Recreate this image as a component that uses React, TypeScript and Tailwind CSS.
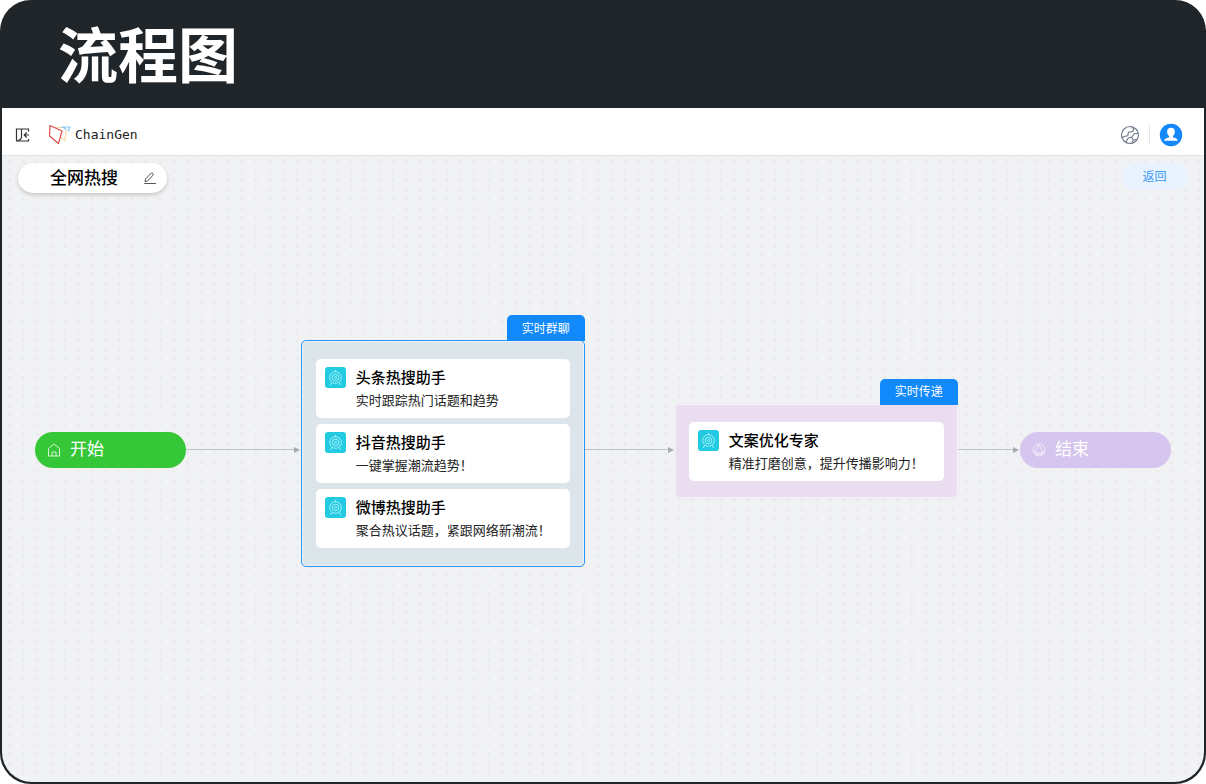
import React from "react";

type Agent = { name: string; desc: string };

const searchAgents: Agent[] = [
  { name: "头条热搜助手", desc: "实时跟踪热门话题和趋势" },
  { name: "抖音热搜助手", desc: "一键掌握潮流趋势！" },
  { name: "微博热搜助手", desc: "聚合热议话题，紧跟网络新潮流！" },
];

const copyAgents: Agent[] = [
  { name: "文案优化专家", desc: "精准打磨创意，提升传播影响力！" },
];

function CollapseIcon() {
  return (
    <svg className="size-4" viewBox="0 0 16 16" fill="none" stroke="#333" strokeWidth="1.2" aria-hidden="true">
      <path d="M14.500 4.500V2H2.500v12h12v-2" />
      <path d="M7.500 2v8.500c0 1.500-2 2.500-4 3.500" />
      <path d="M15 8H10.500M12.700 5.500L10.200 8l2.500 2.500" />
    </svg>
  );
}

function Logo() {
  return (
    <svg className="size-6 shrink-0" viewBox="0 0 24 24" fill="none" strokeWidth="1.2" aria-hidden="true">
      <path d="M7 4.500h9.500l1.500 3.500-1 9.500-4.500-3.500" stroke="#fbd9ae" />
      <path d="M13 4h9l-2 4.500M15.500 4.500l3 2" stroke="#85c4f7" />
      <path d="M2 2.500l12 5.500-3.500 12.500L1.500 13z" stroke="#dc4a4a" strokeLinejoin="round" />
    </svg>
  );
}

function PencilIcon() {
  return (
    <svg className="size-4" viewBox="0 0 16 16" fill="none" stroke="#555" strokeWidth="1" aria-hidden="true">
      <path d="M3.500 9L9.300 3c.8-.7 2.700.9 1.900 1.900L5.700 11l-2.700.6zM2.300 13.500h11.700" strokeLinejoin="round" />
    </svg>
  );
}

function GlobeIcon() {
  return (
    <svg className="size-5" viewBox="0 0 20 20" fill="none" stroke="#6b7685" strokeWidth="1.1" aria-hidden="true">
      <circle cx="10" cy="10" r="8.500" />
      <path
        d="M11.500 1.700l2.300 2.500-1 2.300-4.300.7-.8 3.600-3.700.7-2.200 1.600M18.300 8.300l-3.800.4-3 3.600-3.500 1-2 4M11.500 12.300l1.900 2.700-1.700 3.300M13.400 15l4-.8"
        strokeLinejoin="round"
      />
    </svg>
  );
}

function UserIcon() {
  return (
    <svg className="size-6" viewBox="0 0 24 24" aria-hidden="true">
      <circle cx="12" cy="12" r="11.200" fill="#1487fb" />
      <path
        d="M12 4.800c2.500 0 3.900 1.600 3.900 4 0 1.800-.8 3.400-2 4.200v1.200c1.500.7 4.700 1.100 4.900 3.500H5.200c.2-2.400 3.400-2.800 4.900-3.500V13c-1.200-.8-2-2.400-2-4.200 0-2.400 1.400-4 3.900-4z"
        fill="#fff"
      />
    </svg>
  );
}

function AgentIcon() {
  return (
    <svg className="mt-2 size-[21px] shrink-0" viewBox="0 0 21 21" fill="none" stroke="#b5f3fa" strokeWidth="0.9" aria-hidden="true">
      <rect width="21" height="21" rx="3" fill="#22cbe2" stroke="none" />
      <circle cx="10.500" cy="10.500" r="5.800" />
      <circle cx="10.500" cy="10.500" r="3.300" />
      <circle cx="10.500" cy="10.500" r="1" />
      <path d="M10.500 3v2M7 15.300l-1.800 2.700M14 15.300l1.800 2.700" />
    </svg>
  );
}

function HomeIcon() {
  return (
    <svg className="size-4" viewBox="0 0 16 16" fill="none" stroke="#d5f5d5" strokeWidth="1" aria-hidden="true">
      <path d="M2.500 6.500L8 2l5.500 4.500v7.500h-11zM6 14v-4h4v4" />
    </svg>
  );
}

function EndIcon() {
  return (
    <svg className="size-4" viewBox="0 0 16 16" fill="none" stroke="#f3ecfb" strokeWidth="1" aria-hidden="true">
      <circle cx="8" cy="8" r="6" />
      <path d="M8 2.500l4.500 8.500h-9z" strokeLinejoin="round" />
      <path d="M4 12.200h8" />
    </svg>
  );
}

function DotGrid() {
  return (
    <svg className="absolute inset-0 size-full" aria-hidden="true">
      <defs>
        <pattern id="dots" x="1" y="0.7" width="13.668" height="9.407" patternUnits="userSpaceOnUse">
          <circle cx="6.834" cy="4.7" r="1.7" fill="#e9eaec" />
        </pattern>
      </defs>
      <rect width="100%" height="100%" fill="url(#dots)" />
    </svg>
  );
}

function Arrow({ className }: { className: string }) {
  return (
    <div className={"mb-2 flex min-w-4 items-center pr-px " + className}>
      <div className="h-px flex-1 bg-[#bfc2c5]" />
      <svg className="size-1.5" viewBox="0 0 6 6" aria-hidden="true">
        <path d="M0 0l6 3-6 3z" fill="#a6abae" />
      </svg>
    </div>
  );
}

function Terminal({ label, icon, className }: { label: string; icon: React.ReactNode; className: string }) {
  return (
    <div
      className={
        "mb-2 flex h-9 w-[151px] shrink-0 items-center gap-2 rounded-full pl-[11px] text-[17px] text-white " + className
      }
    >
      {icon}
      {label}
    </div>
  );
}

function AgentCard({ agent }: { agent: Agent }) {
  return (
    <article className="flex h-[59px] gap-2.5 rounded-[5px] bg-white pl-[9px]">
      <AgentIcon />
      <div className="pt-2">
        <h3 className="text-[15px] leading-[22px] font-medium text-black">{agent.name}</h3>
        <p className="text-[13px] leading-[22px] whitespace-nowrap text-[#222]">{agent.desc}</p>
      </div>
    </article>
  );
}

function Group({
  label,
  agents,
  className,
  panelClassName,
}: {
  label: string;
  agents: Agent[];
  className: string;
  panelClassName: string;
}) {
  return (
    <section className={"relative shrink-0 " + className}>
      <h2 className="absolute right-0 bottom-full -mb-px flex h-[26px] w-[78px] items-center justify-center rounded-t-[5px] bg-[#1189fb] pt-px text-xs text-white">
        {label}
      </h2>
      <div className={"flex flex-col rounded-[5px] border " + panelClassName}>
        {agents.map((a) => (
          <AgentCard key={a.name} agent={a} />
        ))}
      </div>
    </section>
  );
}

export default function App() {
  return (
    <div className="flex min-h-screen flex-col overflow-hidden rounded-[31px] bg-[#202529] px-0.5 pb-0.5 font-['Inter','Noto_Sans_CJK_SC',sans-serif]">
      <header className="flex h-[108px] shrink-0 items-center px-14 pt-1">
        <h1 className="text-[60px] leading-none font-bold text-white">流程图</h1>
      </header>
      <div className="flex flex-1 flex-col overflow-hidden rounded-b-[30px] bg-[#f1f2f4]">
        <nav className="flex h-12 shrink-0 items-center border-b border-[#e2e2e3] bg-white pt-1.5 pr-[21px] pl-3">
          <button type="button" aria-label="收起侧栏">
            <CollapseIcon />
          </button>
          <a href="#" className="ml-[18px] flex items-center gap-[3px]">
            <Logo />
            <span className="font-['DejaVu_Sans_Mono',monospace] text-[13px] text-[#222]">ChainGen</span>
          </a>
          <div className="ml-auto flex items-center gap-[9px]">
            <button type="button" aria-label="语言">
              <GlobeIcon />
            </button>
            <div className="h-5 w-px bg-[#e4e5e7]" />
            <button type="button" aria-label="用户">
              <UserIcon />
            </button>
          </div>
        </nav>
        <main className="relative flex flex-1 flex-col">
          <DotGrid />
          <div className="relative flex items-start justify-between px-4 pt-[7px]">
            <div className="flex h-[30px] w-[149px] items-center justify-between rounded-full bg-white pr-[9px] pl-8 shadow-[0_2px_4px_rgba(0,0,0,0.18)]">
              <h2 className="pt-px text-[17px] font-medium text-black">全网热搜</h2>
              <button type="button" aria-label="编辑名称">
                <PencilIcon />
              </button>
            </div>
            <button type="button" className="h-[27px] w-[67px] rounded-full bg-[#e8f3ff] text-xs text-[#3c9bf5]">
              返回
            </button>
          </div>
          <div className="relative flex items-center px-[33px] pt-[147px]">
            <Terminal label="开始" icon={<HomeIcon />} className="bg-[#36c738]" />
            <Arrow className="flex-[115]" />
            <Group
              label="实时群聊"
              agents={searchAgents}
              className="w-[284px]"
              panelClassName="gap-1.5 border-[#2b94f8] bg-[#dce5e9] px-3.5 py-[18px] shadow-[inset_0_0_0_1px_#edf2f5]"
            />
            <Arrow className="flex-[90]" />
            <Group
              label="实时传递"
              agents={copyAgents}
              className="mb-1.5 w-[283px]"
              panelClassName="border-[#f8f2fb] bg-[#eaddef] px-[13px] pt-[17px] pb-4 shadow-[0_0_2px_#e6d8ee]"
            />
            <Arrow className="flex-[62]" />
            <Terminal label="结束" icon={<EndIcon />} className="bg-[#d6c5ee]" />
          </div>
        </main>
      </div>
    </div>
  );
}
